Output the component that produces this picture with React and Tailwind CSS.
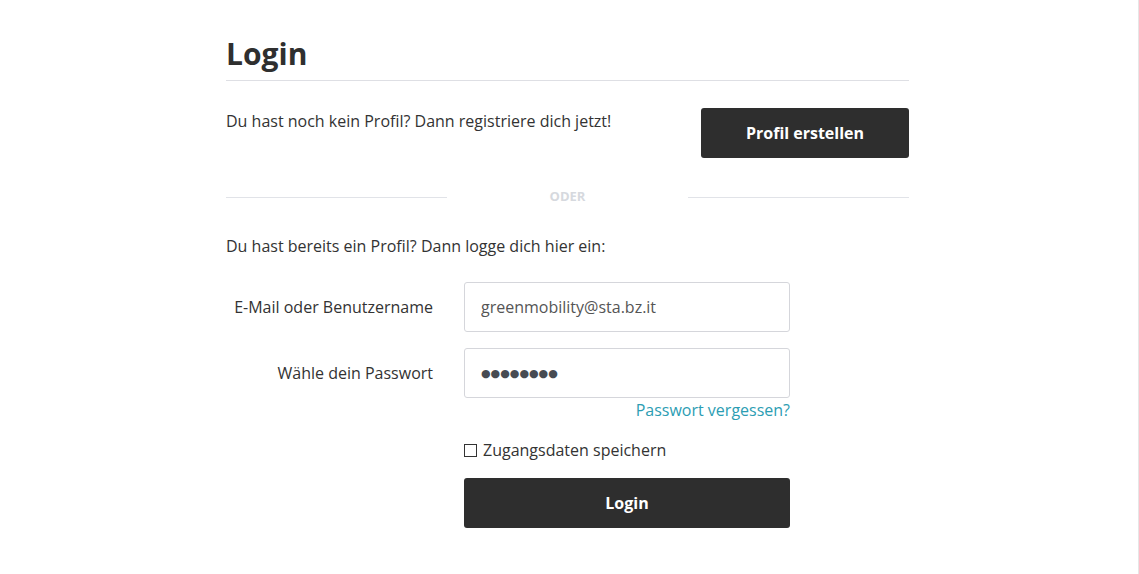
import React from "react";

function App() {
    return (
        <div className="min-h-screen w-full bg-white border-r border-[#e6e6e6] text-[#333333]" style={{ fontFamily: '"Open Sans", sans-serif' }}>
            <div className="ml-[226px] w-[683px] pt-[34px] pb-[40px]">
                <h1 className="text-[30px] leading-[40px] font-bold text-[#2f2f2f] pb-[6px] border-b border-[#dedfe4]">
                    Login
                </h1>

                <div className="flex justify-between items-start mt-[27px]">
                    <p className="text-[16px] leading-[24px] pt-[1px]">
                        Du hast noch kein Profil? Dann registriere dich jetzt!
                    </p>
                    <button className="w-[208px] h-[50px] bg-[#2e2e2e] rounded-[3px] text-white font-bold text-[16px]">
                        Profil erstellen
                    </button>
                </div>

                <div className="flex items-center mt-[29px] h-[20px]">
                    <div className="flex-1 h-px bg-[#e1e3e8]"></div>
                    <span className="w-[241px] text-center text-[13px] font-bold text-[#d6d9de] uppercase">ODER</span>
                    <div className="flex-1 h-px bg-[#e1e3e8]"></div>
                </div>

                <p className="text-[16px] leading-[24px] mt-[27px]">
                    Du hast bereits ein Profil? Dann logge dich hier ein:
                </p>

                <form className="mt-[24px]">
                    <div className="flex items-center">
                        <label className="w-[207px] text-right text-[16px]">E-Mail oder Benutzername</label>
                        <input
                            type="text"
                            defaultValue="greenmobility@sta.bz.it"
                            className="ml-[31px] w-[326px] h-[50px] border border-[#d5d6db] rounded-[3px] px-[16px] text-[16px] text-[#555555] outline-none"
                        />
                    </div>
                    <div className="flex items-center mt-[16px]">
                        <label className="w-[207px] text-right text-[16px]">Wähle dein Passwort</label>
                        <input
                            type="text"
                            readOnly
                            value="●●●●●●●●"
                            className="ml-[31px] w-[326px] h-[50px] border border-[#d5d6db] rounded-[3px] px-[16px] text-[11px] text-[#474b52] outline-none"
                            style={{ fontFamily: '"DejaVu Sans", sans-serif' }}
                        />
                    </div>
                    <div className="w-[564px] text-right leading-[24px]">
                        <a href="#" className="text-[16px] text-[#2c9db3]">Passwort vergessen?</a>
                    </div>
                    <label className="flex items-center ml-[238px] mt-[16px] h-[24px] text-[16px]">
                        <span className="w-[13px] h-[13px] border border-[#333333] mr-[6px]"></span>
                        Zugangsdaten speichern
                    </label>
                    <button type="button" className="ml-[238px] mt-[16px] w-[326px] h-[50px] bg-[#2e2e2e] rounded-[3px] text-white font-bold text-[16px]">
                        Login
                    </button>
                </form>
            </div>
        </div>
    );
}

export default App;
